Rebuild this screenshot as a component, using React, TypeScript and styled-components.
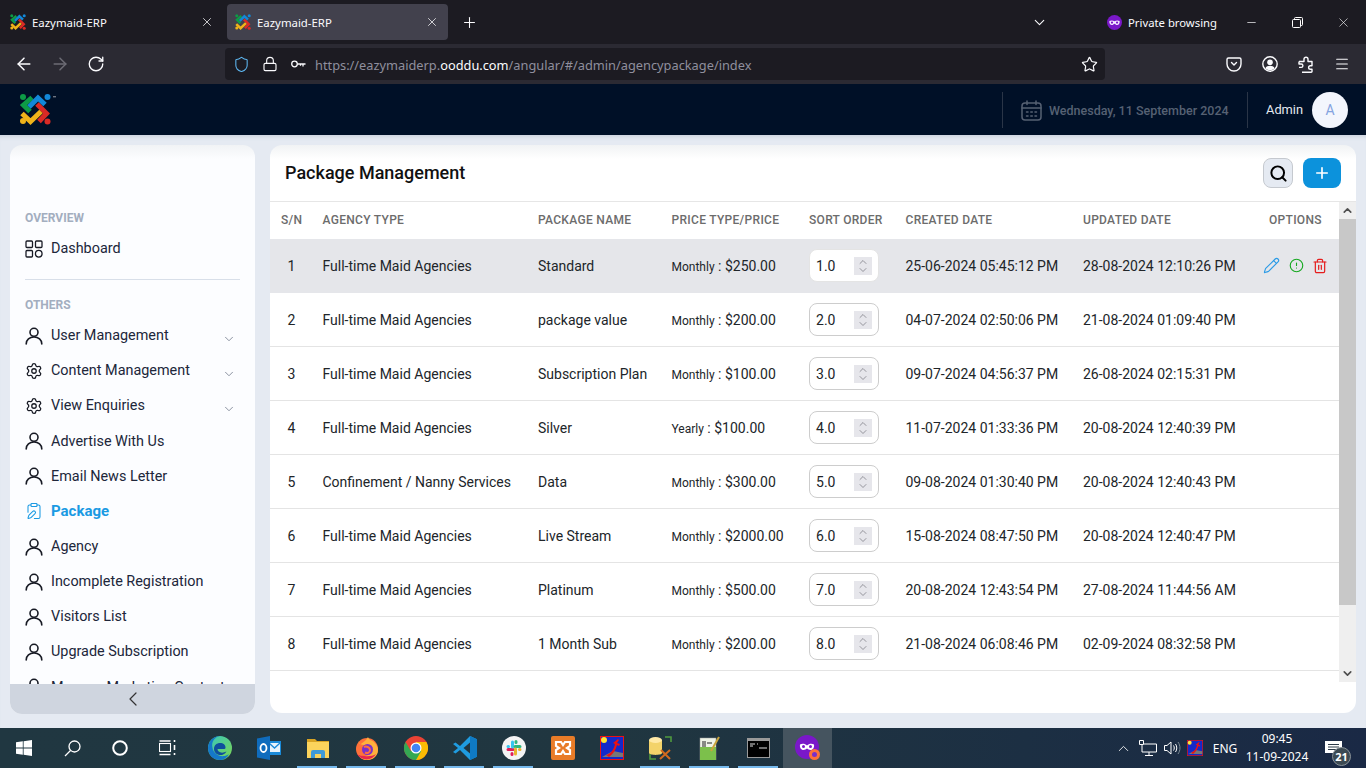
import React from "react";
import styled, { createGlobalStyle } from "styled-components";
import {
  ArrowLeft, ArrowRight, RotateCw, Shield, Lock, Star, Menu, X, Plus, ChevronDown, ChevronUp, ChevronLeft,
  Minus, Settings, ClipboardPen, Pencil, CircleAlert, Trash2, Search,
} from "lucide-react";

const Global = createGlobalStyle`
  html, body { margin: 0; padding: 0; height: 100%; overflow: hidden; }
  body { font-family: Roboto, "Liberation Sans", sans-serif; background: #e5eaf2; }
  * { box-sizing: border-box; }
`;

const Page = styled.div`
  width: 1366px; height: 768px; display: flex; flex-direction: column; overflow: hidden;
`;

/* ---------- browser chrome ---------- */
const TabBar = styled.div`
  height: 44px; background: #1c1b22; display: flex; align-items: flex-start; padding: 4px 0 0 2px; color: #fbfbfe;
  font-family: "Noto Sans", sans-serif; font-size: 11.4px; flex: none;
`;
const Tab = styled.div<{ $active?: boolean }>`
  width: 221px; height: 36px; border-radius: 4px; display: flex; align-items: center; padding: 0 9px 0 8px; gap: 6px;
  background: ${(p) => (p.$active ? "#42414d" : "transparent")};
  margin-right: ${(p) => (p.$active ? "0" : "4px")};
  & > span { flex: 1; }
`;
const NewTab = styled.div`
  width: 42px; height: 36px; display: flex; align-items: center; justify-content: center;
`;
const TabSpacer = styled.div`flex: 1;`;
const TabList = styled.div`
  width: 30px; height: 36px; margin-right: 53px; display: flex; align-items: center; justify-content: center;
`;
const Private = styled.div`
  display: flex; align-items: center; gap: 6px; height: 36px; width: 121px; font-size: 11.3px; white-space: nowrap;
`;
const WinBtn = styled.div`
  width: 46px; height: 36px; display: flex; align-items: center; justify-content: center;
`;
const Toolbar = styled.div`
  height: 40px; background: #2b2a33; display: flex; align-items: center; flex: none; color: #fbfbfe;
`;
const NavGroup = styled.div`
  width: 225px; display: flex; align-items: center; padding-left: 14px; gap: 16px; flex: none;
`;
const Reload = styled.span`
  display: flex; margin-left: 1px;
`;
const UrlBar = styled.div`
  width: 880px; height: 32px; background: #1c1b22; border-radius: 4px; display: flex; align-items: center; padding-left: 8px;
  font-family: "Noto Sans", sans-serif; font-size: 12.8px; color: #8f8f9d; flex: none;
  b { font-weight: 400; color: #fbfbfe; }
`;
const UrlIcons = styled.div`
  display: flex; align-items: center; gap: 12px; margin-right: 9px; flex: none; color: #fbfbfe;
`;
const UrlText = styled.div`flex: 1; white-space: nowrap; padding-top: 1px;`;
const UrlEnd = styled.div`width: 32px; display: flex; justify-content: center; color: #fbfbfe;`;
const ToolIcons = styled.div`
  flex: 1; display: flex; align-items: center; justify-content: flex-end; gap: 20px; padding-right: 16px;
`;

/* ---------- app header ---------- */
const AppHeader = styled.header`
  height: 51px; background: #001027; display: flex; align-items: center; padding: 0 18px 0 19px; flex: none;
`;
const HeaderRight = styled.div`
  margin-left: auto; display: flex; align-items: center; height: 36px;
`;
const DateBlock = styled.div`
  height: 36px; border-left: 1px solid #2a3547; border-right: 1px solid #2a3547; display: flex; align-items: center;
  gap: 7px; padding: 1px 0 0 18px; width: 246px;
  font-size: 12.5px; font-weight: 500; color: #566173; white-space: nowrap;
  & > svg { flex: none; }
`;
const AdminName = styled.div`
  color: #e5e9f0; font-size: 12.8px; margin: 0 9px 0 18px;
`;
const Avatar = styled.div`
  width: 36px; height: 36px; border-radius: 50%; background: #f3f6fd; color: #84a3e0; display: flex; align-items: center;
  justify-content: center; font-size: 14px;
`;

/* ---------- body ---------- */
const Main = styled.div`
  height: 593px; background: #e5eaf2; display: flex; padding: 10px 10px 14px 10px; gap: 15px; flex: none;
  box-shadow: inset 0 5px 5px -4px #c4ccd8;
`;
const Sidebar = styled.aside`
  width: 245px; height: 569px; border-radius: 12px; overflow: hidden; display: flex; flex-direction: column;
  background: linear-gradient(#f1f3f5 0, #fcfdff 14px);
`;
const SideScroll = styled.nav`
  flex: 1; overflow: hidden; padding: 66px 15px 0;
`;
const SideLabel = styled.div`
  font-size: 12px; font-weight: 700; color: #a3aebf; height: 14px; line-height: 14px; margin-bottom: 6px;
`;
const SideItem = styled.div<{ $active?: boolean }>`
  height: 35.15px; display: flex; align-items: center; gap: 8px; font-size: ${(p) => (p.$active ? "15px" : "14.4px")}; white-space: nowrap;
  font-weight: ${(p) => (p.$active ? 700 : 400)};
  color: ${(p) => (p.$active ? "#1a9ae3" : "#20263a")};
  & > svg { flex: none; }
`;
const Caret = styled.span`
  margin-left: auto; margin-right: 4px; margin-top: 7px; display: flex; color: #7b8494;
`;
const SideRule = styled.div`
  height: 1px; background: #d8dfe9; margin: 13px 0 18px;
`;
const SideFooter = styled.div`
  height: 30px; background: #cfd5df; display: flex; align-items: center; justify-content: center; flex: none; color: #333;
`;

const Panel = styled.section`
  width: 1086px; height: 568px; border-radius: 12px; overflow: hidden; display: flex; flex-direction: column;
  background: linear-gradient(#f1f3f4 0, #fff 14px);
`;
const PanelHead = styled.div`
  height: 57px; display: flex; align-items: center; padding: 0 15px; border-bottom: 1px solid #e6e6e6; flex: none;
`;
const Title = styled.h1`
  margin: 0; font-size: 18px; font-weight: 500; color: #111; flex: 1; position: relative; top: -1px;
`;
const SearchBtn = styled.div`
  width: 30px; height: 30px; border-radius: 8px; background: #e5eaf2; border: 1px solid #c5c9cf; display: flex;
  align-items: center; justify-content: center; margin-right: 10px;
`;
const AddBtn = styled.div`
  width: 38px; height: 30px; border-radius: 8px; background: #0c92dc; color: #fff; display: flex;
  align-items: center; justify-content: center;
`;
const TableWrap = styled.div`
  height: 480px; display: flex; flex: none;
`;
const Table = styled.div`
  width: 1069px; flex: none; overflow: hidden;
`;
const COLS = "41.5px 215.5px 133.5px 137.5px 96.5px 177.5px 180px 87px";
const HeadRow = styled.div`
  height: 37px; display: grid; grid-template-columns: ${COLS}; align-items: center; padding: 0 0 2px 11px;
  font-size: 12px; font-weight: 500; color: #6c6c6c; letter-spacing: 0.3px; white-space: nowrap;
`;
const OptionsHead = styled.span`
  padding-left: 6px;
`;
const Row = styled.div<{ $active?: boolean }>`
  height: 54px; display: grid; grid-template-columns: ${COLS}; align-items: center; padding-left: 11px;
  font-size: 14px; color: #212529; white-space: nowrap; border-bottom: 1px solid #e4e4e4;
  background: ${(p) => (p.$active ? "#e5e6ea" : "#fff")};
  border-bottom-color: ${(p) => (p.$active ? "#e5e6ea" : "#e4e4e4")};
`;
const Num = styled.span`
  width: 21px; text-align: center;
`;
const Price = styled.span`
  small { font-size: 12px; }
`;
const SortBox = styled.div<{ $active?: boolean }>`
  width: 70px; height: 33px; background: #fff; border: 1px solid ${(p) => (p.$active ? "#e4e4e4" : "#cdcdcd")};
  border-radius: 8px; display: flex; align-items: center; padding-left: 6px; justify-content: space-between; padding-right: 6px;
`;
const Spin = styled.div`
  width: 18px; height: 18px; background: #e6e6eb; display: flex; flex-direction: column; align-items: center;
  justify-content: center; color: #85858e; svg { margin: -2px 0; }
`;
const Options = styled.div`
  display: flex; align-items: center; gap: 8.5px;
`;
const Scrollbar = styled.div`
  width: 17px; background: #efefef; display: flex; flex-direction: column; flex: none; color: #505050;
`;
const ScrollEnd = styled.div`
  height: 17px; display: flex; align-items: center; justify-content: center; flex: none;
`;
const ScrollThumb = styled.div`
  height: 386px; background: #c8c8c8; flex: none;
`;
const ScrollGap = styled.div`flex: 1;`;

/* ---------- taskbar ---------- */
const Taskbar = styled.footer`
  height: 40px; display: flex; align-items: center; background: linear-gradient(90deg, #203741 0, #203640 45%, #1c2f43 75%, #1a2945 100%);
  color: #fff; flex: none;
`;
const SysBtn = styled.div`
  width: 48px; height: 40px; display: flex; align-items: center; justify-content: center; flex: none;
`;
const Tile = styled.div<{ $open?: boolean; $active?: boolean }>`
  width: 49px; height: 40px; display: flex; align-items: center; justify-content: center; flex: none; position: relative;
  background: ${(p) => (p.$active ? "#45545f" : "transparent")};
  &::after {
    content: ""; position: absolute; left: 4px; right: 5px; bottom: 0; height: 2px;
    background: ${(p) => (p.$open ? "#76b9ed" : "transparent")};
  }
`;
const TileGroup = styled.div`
  display: flex; margin-left: 3px;
`;
const Tray = styled.div`
  margin-left: auto; display: flex; align-items: center; height: 40px; padding-right: 18px; font-family: "Noto Sans", sans-serif;
  font-size: 12px; color: #fff;
`;
const TraySlot = styled.div<{ $w: number }>`
  width: ${(p) => p.$w}px; display: flex; justify-content: center; align-items: center; flex: none;
`;
const Clock = styled.div`
  width: 68px; text-align: center; line-height: 18px; font-size: 12px; flex: none; white-space: nowrap;
`;
const Notify = styled.div`
  width: 30px; height: 40px; margin-left: 7px; position: relative; display: flex; align-items: center; justify-content: center;
`;
const NotifyCount = styled.span`
  position: absolute; left: 14px; top: 19px; width: 19px; height: 19px; border-radius: 50%; background: #3c4a53;
  border: 1px solid #8b949a; font-size: 11px; font-weight: 700; display: flex; align-items: center; justify-content: center; line-height: 1;
`;

/* ---------- drawings ---------- */
const LogoMarks = () => (
  <>
    <circle cx="23" cy="98" r="3" fill="#0d9b46" />
    <circle cx="47.5" cy="98" r="3" fill="#1288d8" />
    <circle cx="23" cy="122" r="3" fill="#efb31a" />
    <circle cx="47.5" cy="122.5" r="3" fill="#da2a25" />
    <polyline points="32,98.5 23.5,106 30,112.5" stroke="#0d9b46" strokeWidth="5" />
    <polyline points="29,108 38,99 45,105.5" stroke="#1288d8" strokeWidth="5" />
    <polyline points="37,105 46.5,114.5 39,122.5" stroke="#da2a25" strokeWidth="5" />
    <polyline points="22,114.5 30.5,122.5 41,112.5" stroke="#efb31a" strokeWidth="5" />
  </>
);
const Logo = () => (
  <svg width="38" height="34" viewBox="19 94 38 34" fill="none">
    <LogoMarks />
    <rect x="53" y="97" width="3" height="1.4" fill="#6d7480" />
  </svg>
);
const Favicon = () => (
  <svg width="16" height="16" viewBox="19.5 94.5 31.5 31.5" fill="none"><LogoMarks /></svg>
);
const UserIcon = () => (
  <svg width="18" height="18" viewBox="0 0 18 18" fill="none" stroke="#171a24" strokeWidth="1.6" strokeLinecap="round">
    <circle cx="9" cy="5.3" r="4" />
    <path d="M1.2 17c0-4.2 3.4-7 7.8-7s7.800 2.800 7.800 7" />
  </svg>
);
const DashIcon = () => (
  <svg width="18" height="18" viewBox="0 0 18 18" fill="none" stroke="#171a24" strokeWidth="1.300">
    <rect x="1" y="1" width="6.500" height="6.500" rx="1" />
    <rect x="10.500" y="1" width="6.500" height="6.500" rx="1" />
    <rect x="1" y="10.500" width="6.500" height="6.500" rx="1" />
    <circle cx="13.750" cy="13.750" r="3.300" />
  </svg>
);
const PrivateMask = () => (
  <svg width="15" height="15" viewBox="0 0 16 16">
    <circle cx="8" cy="8" r="8" fill="#7a18c9" />
    <path d="M2.500 6.500c1.800-1 3.800-.8 5.500.2 1.700-1 3.700-1.200 5.500-.2.200 2.800-1 4.200-2.700 4.200-1.200 0-2-1-2.800-1.400-.8.400-1.600 1.400-2.800 1.400-1.700 0-2.900-1.400-2.700-4.200z" fill="#f4e9ff" />
    <circle cx="5.300" cy="8" r="1.200" fill="#7a18c9" /><circle cx="10.700" cy="8" r="1.200" fill="#7a18c9" />
  </svg>
);
const KeyIcon = () => (
  <svg width="16" height="16" viewBox="0 0 16 16" fill="none" stroke="#fbfbfe" strokeWidth="1.300">
    <circle cx="4.500" cy="8" r="2.800" /><path d="M7.300 8H15.500M13 8v2.500M10.500 8v1.800" />
  </svg>
);
const Restore = () => (
  <svg width="11" height="11" viewBox="0 0 11 11" fill="none" stroke="#fff" strokeWidth="1">
    <rect x=".5" y="2.500" width="8" height="8" rx="1" /><path d="M2.500 2.500V1.500a1 1 0 0 1 1-1h6a1 1 0 0 1 1 1v6a1 1 0 0 1-1 1h-1" />
  </svg>
);
const Pocket = () => (
  <svg width="16" height="16" viewBox="0 0 16 16" fill="none" stroke="#fbfbfe" strokeWidth="1.400" strokeLinecap="round" strokeLinejoin="round">
    <path d="M2.500 2h11A1.500 1.500 0 0 1 15 3.500V8a7 7 0 0 1-14 0V3.500A1.500 1.500 0 0 1 2.500 2z" /><path d="M5.500 6.500L8 9l2.500-2.500" />
  </svg>
);
const Account = () => (
  <svg width="16" height="16" viewBox="0 0 16 16" fill="none">
    <circle cx="8" cy="8" r="7.200" stroke="#fbfbfe" strokeWidth="1.400" />
    <circle cx="8" cy="6.300" r="2.800" fill="#fbfbfe" />
    <path d="M3.300 12.200c1-1.700 2.700-2.400 4.700-2.400s3.700.7 4.700 2.400c-1.200 1.300-2.800 2-4.700 2s-3.500-.7-4.700-2z" fill="#fbfbfe" />
  </svg>
);
const PuzzleIcon = () => (
  <svg width="16" height="17" viewBox="0 0 16 17" fill="none" stroke="#fbfbfe" strokeWidth="1.400" strokeLinejoin="round">
    <path d="M1 5.500h5V3.200a2 2 0 0 1 4 0v2.300h4v4.200h-1.600a1.800 1.800 0 0 0 0 3.600H14V15.500a.8.800 0 0 1-.8.800H4M1 5.500V8h2.200a1.700 1.700 0 0 1 0 3.400H1" />
  </svg>
);
const CalendarIcon = () => (
  <svg width="21" height="21" viewBox="0 0 21 21" fill="none" stroke="#566173" strokeWidth="1.500" strokeLinecap="round">
    <rect x="1" y="3" width="19" height="17" rx="3" /><path d="M1 8h19M6 1v3.500M15 1v3.500" />
    <path d="M5.500 12h1.500M9.800 12h1.500M14 12h1.500M5.500 16h1.500M9.800 16h1.500M14 16h1.500" />
  </svg>
);
const WinLogo = () => (
  <svg width="16" height="16" viewBox="0 0 16 16" fill="#fff">
    <path d="M0 2.300l6.800-1v6.300H0zM7.600 1.200L16 0v7.600H7.600zM0 8.400h6.800v6.300l-6.800-1zM7.600 8.400H16V16l-8.400-1.200z" />
  </svg>
);
const TaskSearch = () => (
  <svg width="17" height="17" viewBox="0 0 17 17" fill="none" stroke="#fff" strokeWidth="1.300">
    <circle cx="10.500" cy="6.500" r="5.500" /><path d="M6.500 10.500L1 16" />
  </svg>
);
const Cortana = () => (
  <svg width="16" height="16" viewBox="0 0 16 16" fill="none" stroke="#fff" strokeWidth="2"><circle cx="8" cy="8" r="6.800" /></svg>
);
const TaskView = () => (
  <svg width="18" height="16" viewBox="0 0 18 16" fill="none" stroke="#fff" strokeWidth="1.100">
    <rect x=".5" y="3.500" width="11" height="8" /><path d="M.5 1h11M.5 14.500h11M15.500 0v2M15.500 5v5M15.500 13v2" strokeWidth="1.600" />
  </svg>
);
const Edge = () => (
  <svg width="24" height="24" viewBox="0 0 24 24">
    <defs>
      <linearGradient id="eg" x1="0" y1="0" x2="1" y2="1"><stop offset="0" stopColor="#36c7c0" /><stop offset="1" stopColor="#7cd651" /></linearGradient>
    </defs>
    <circle cx="12" cy="12" r="12" fill="url(#eg)" />
    <path d="M0 12C0 5 6 0 12 0c-5 1-9 5-7.500 12 1 5 6 9 12 8 1.500-.2 3-1 4.500-2-2 4-5.500 6-9 6-7 0-12-5-12-12z" fill="#1578c9" />
    <path d="M6 13c0-4 3-6 6-6 3.500 0 5.500 2 5.500 4.500 0 1-.5 1.500-2 1.500h-6c0 3 4 5 9 2.500-2 3-5 4-7 3.500-3-.5-5.500-3-5.500-6z" fill="#0f4f9d" />
  </svg>
);
const Outlook = () => (
  <svg width="24" height="24" viewBox="0 0 24 24">
    <rect x="10" y="5" width="14" height="14" fill="#1a8ad8" />
    <path d="M12 7h11v9H12z" fill="#e7f3fb" /><path d="M12 7l5.500 5L23 7" fill="none" stroke="#1a8ad8" strokeWidth="1.300" />
    <path d="M0 2.500L13 0v24L0 21.500z" fill="#0f6cbd" />
    <ellipse cx="6.500" cy="12" rx="3" ry="4" fill="none" stroke="#fff" strokeWidth="1.800" />
  </svg>
);
const Folder = () => (
  <svg width="22" height="20" viewBox="0 0 22 20">
    <path d="M0 1h8l2 2h12v3H0z" fill="#d9a424" />
    <rect x="0" y="4" width="22" height="16" fill="#fbd35c" />
    <path d="M4 20v-6a2 2 0 0 1 2-2h10a2 2 0 0 1 2 2v6h-4v-4H8v4z" fill="#3f9ad8" />
  </svg>
);
const Firefox = () => (
  <svg width="24" height="24" viewBox="0 0 24 24">
    <circle cx="12" cy="13" r="11" fill="#ff7139" />
    <path d="M3 5c1 2 1 3 3 3 2-2 5-3 7-7 1 3 3 3 6 5 3 3 4 6 4 8 0 6-5 10-11 10-3 0-8-2-9-6 5 4 11 2 12-1 .5-2-2-4-5-4 0-3 2-3 2-4.500-4 1-6 1-9-3.500z" fill="#ffb13c" />
    <circle cx="12.500" cy="13.500" r="5.500" fill="#7b2fc9" />
    <path d="M9 11c2-1 6 0 6 3s-3 3.500-5 2.500" fill="none" stroke="#ff6f3c" strokeWidth="2" />
    <path d="M2 18a11 11 0 0 0 19 0c-4 3-14 3-19 0z" fill="#e6274d" />
  </svg>
);
const ChromeIcon = () => (
  <svg width="24" height="24" viewBox="0 0 24 24">
    <circle cx="12" cy="12" r="12" fill="#ea4335" />
    <path d="M12 24a12 12 0 0 0 10.400-18H12z" fill="#fbbc04" />
    <path d="M1.600 6A12 12 0 0 0 12 24l5.200-9H6.800z" fill="#34a853" />
    <circle cx="12" cy="12" r="5.500" fill="#fff" /><circle cx="12" cy="12" r="4.300" fill="#4285f4" />
  </svg>
);
const VSCode = () => (
  <svg width="24" height="24" viewBox="0 0 24 24">
    <path d="M17 0l7 3.300v17.400L17 24 7 14l-4.500 3.500L0 16l5-4-5-4 2.500-1.500L7 10z" fill="#1f9ce0" />
    <path d="M17 0l7 3.300v17.400L17 24z" fill="#0f7ac4" /><path d="M17 6.500L10.500 12l6.500 5.500z" fill="#203640" />
  </svg>
);
const Slack = () => (
  <svg width="24" height="24" viewBox="0 0 24 24" strokeWidth="3" strokeLinecap="round">
    <circle cx="12" cy="12" r="12" fill="#f4f4f4" />
    <path d="M6 13.500h5M10 17.500v1" stroke="#e01e5a" />
    <path d="M10.500 6v5M6 10.500h.5" stroke="#36c5f0" />
    <path d="M18 10.500h-5M14 6.500v-1" stroke="#2eb67d" />
    <path d="M13.500 18v-5M18 13.500h-.5" stroke="#ecb22e" />
  </svg>
);
const Xampp = () => (
  <svg width="24" height="24" viewBox="0 0 24 24">
    <rect width="24" height="24" rx="2" fill="#e87c28" />
    <path d="M5 6h5l2 3 2-3h5v4l-3 2 3 2v4h-5l-2-3-2 3H5v-4l3-2-3-2z" fill="none" stroke="#fff" strokeWidth="2.200" />
  </svg>
);
const XServer = ({ s }: { s: number }) => (
  <svg width={s} height={s} viewBox="0 0 24 24">
    <rect x=".5" y=".5" width="23" height="23" fill="#1529c9" stroke="#ee1111" />
    <circle cx="4" cy="4" r="3" fill="#ffe534" />
    <path d="M2 21h21v-4l-10-2z" fill="#777" />
    <path d="M6 19c5-1 8-6 9-11l-2-1 5-4 1 1-2 3 3 1-1 2-2-1c-1 5-4 9-8 12z" fill="#ee1111" />
  </svg>
);
const DbTool = () => (
  <svg width="24" height="24" viewBox="0 0 24 24">
    <path d="M0 4v13c0 2.500 13 2.500 13 0V4z" fill="#f3d36a" /><ellipse cx="6.500" cy="4" rx="6.500" ry="3" fill="#ffe9a6" />
    <path d="M16 1h6v5M1 18v5h6" fill="none" stroke="#4f9a3f" strokeWidth="1.600" />
    <path d="M11 23l10-9M21 23l-9-9" stroke="#d2691e" strokeWidth="2" />
  </svg>
);
const Notepad = () => (
  <svg width="22" height="24" viewBox="0 0 22 24">
    <rect x="1" y="2" width="16" height="22" fill="#eef3e6" stroke="#999" strokeWidth=".5" />
    <rect x="1" y="11" width="16" height="13" fill="#7cc04b" />
    <path d="M4 5v6M6 5v6M8 7h5" stroke="#222" strokeWidth="1" />
    <path d="M12 15L20 1" stroke="#c9a33b" strokeWidth="2" />
  </svg>
);
const Cmd = () => (
  <svg width="23" height="20" viewBox="0 0 23 20">
    <rect width="23" height="20" fill="#9a9a9a" /><rect x="1" y="3" width="21" height="16" fill="#000" />
    <path d="M3 6h5M10 6h1M3 8h3M12 10h8" stroke="#ddd" strokeWidth="1" />
  </svg>
);
const FirefoxPrivate = () => (
  <svg width="26" height="26" viewBox="0 0 26 26">
    <circle cx="12" cy="12" r="12" fill="#7a18c9" />
    <path d="M5 9.500c2-1 5-1 7 1 2-2 5-2 7-1 .5 3-1 5.500-3.500 5.500-1.500 0-2.500-1-3.500-1.500-1 .5-2 1.500-3.500 1.500C6 15 4.500 12.500 5 9.500z" fill="#fff" />
    <circle cx="8.500" cy="11.500" r="1.500" fill="#7a18c9" /><circle cx="15.500" cy="11.500" r="1.500" fill="#7a18c9" />
    <circle cx="19.500" cy="19.500" r="5.500" fill="#ff7139" /><circle cx="19.500" cy="19.500" r="2.500" fill="#7b2fc9" />
  </svg>
);
const NetworkIcon = () => (
  <svg width="18" height="16" viewBox="0 0 18 16" fill="none" stroke="#fff" strokeWidth="1">
    <path d="M4.500 .5H.5v4h4zM5 4h12.500v8H3V5M10 12v3M6 15.500h8" />
  </svg>
);
const Volume = () => (
  <svg width="17" height="14" viewBox="0 0 17 14" fill="none" stroke="#fff" strokeWidth="1">
    <path d="M.5 4.500H3L7 1v12L3 9.500H.5zM9.500 4.500c1 1.500 1 3.500 0 5M11.500 3c1.700 2.500 1.700 5.500 0 8" />
    <path d="M14 1c2.600 3.600 2.600 8.400 0 12" stroke="#7c8a94" />
  </svg>
);
const NoteIcon = () => (
  <svg width="17" height="15" viewBox="0 0 17 15" fill="#fff">
    <path d="M0 0h17v12H0z" /><path d="M3 3.500h11M3 6h11M3 8.500h8" stroke="#2b3a48" strokeWidth="1" />
  </svg>
);

/* ---------- data ---------- */
const F = "Full-time Maid Agencies";
const rows = [
  [F, "Standard", "Monthly", "$250.00", "25-06-2024 05:45:12 PM", "28-08-2024 12:10:26 PM"],
  [F, "package value", "Monthly", "$200.00", "04-07-2024 02:50:06 PM", "21-08-2024 01:09:40 PM"],
  [F, "Subscription Plan", "Monthly", "$100.00", "09-07-2024 04:56:37 PM", "26-08-2024 02:15:31 PM"],
  [F, "Silver", "Yearly", "$100.00", "11-07-2024 01:33:36 PM", "20-08-2024 12:40:39 PM"],
  ["Confinement / Nanny Services", "Data", "Monthly", "$300.00", "09-08-2024 01:30:40 PM", "20-08-2024 12:40:43 PM"],
  [F, "Live Stream", "Monthly", "$2000.00", "15-08-2024 08:47:50 PM", "20-08-2024 12:40:47 PM"],
  [F, "Platinum", "Monthly", "$500.00", "20-08-2024 12:43:54 PM", "27-08-2024 11:44:56 AM"],
  [F, "1 Month Sub", "Monthly", "$200.00", "21-08-2024 06:08:46 PM", "02-09-2024 08:32:58 PM"],
];
const tiles: [React.ReactNode, boolean][] = [
  [<Edge />, false], [<Outlook />, false], [<Folder />, true], [<Firefox />, true], [<ChromeIcon />, true],
  [<VSCode />, true], [<Slack />, true], [<Xampp />, false], [<XServer s={24} />, false], [<DbTool />, true],
  [<Notepad />, true], [<Cmd />, true],
];
const menu: [string, "user" | "gear", boolean][] = [
  ["User Management", "user", true], ["Content Management", "gear", true], ["View Enquiries", "gear", true],
  ["Advertise With Us", "user", false], ["Email News Letter", "user", false],
];
const menu2 = ["Agency", "Incomplete Registration", "Visitors List", "Upgrade Subscription", "Manage Marketing Content"];

export default function App() {
  return (
    <Page>
      <Global />
      <TabBar>
        <Tab>
          <Favicon /><span>Eazymaid-ERP</span><X size={14} strokeWidth={1.300} />
        </Tab>
        <Tab $active>
          <Favicon /><span>Eazymaid-ERP</span><X size={14} strokeWidth={1.300} />
        </Tab>
        <NewTab><Plus size={17} strokeWidth={1.500} /></NewTab>
        <TabSpacer />
        <TabList><ChevronDown size={17} strokeWidth={1.500} /></TabList>
        <Private><PrivateMask />Private browsing</Private>
        <WinBtn><Minus size={13} strokeWidth={1.300} /></WinBtn>
        <WinBtn><Restore /></WinBtn>
        <WinBtn><X size={15} strokeWidth={1} /></WinBtn>
      </TabBar>
      <Toolbar>
        <NavGroup>
          <ArrowLeft size={20} strokeWidth={1.800} />
          <ArrowRight size={20} strokeWidth={1.800} color="#6d6c75" />
          <Reload><RotateCw size={18} strokeWidth={1.800} /></Reload>
        </NavGroup>
        <UrlBar>
          <UrlIcons>
            <Shield size={17} strokeWidth={1.500} color="#5db6f0" />
            <Lock size={16} strokeWidth={1.700} />
            <KeyIcon />
          </UrlIcons>
          <UrlText>https://eazymaiderp.<b>ooddu.com</b>/angular/#/admin/agencypackage/index</UrlText>
          <UrlEnd><Star size={17} strokeWidth={1.700} /></UrlEnd>
        </UrlBar>
        <ToolIcons>
          <Pocket />
          <Account />
          <PuzzleIcon />
          <Menu size={16} strokeWidth={1.600} />
        </ToolIcons>
      </Toolbar>
      <AppHeader>
        <Logo />
        <HeaderRight>
          <DateBlock><CalendarIcon />Wednesday, 11 September 2024</DateBlock>
          <AdminName>Admin</AdminName>
          <Avatar>A</Avatar>
        </HeaderRight>
      </AppHeader>
      <Main>
        <Sidebar>
          <SideScroll>
            <SideLabel>OVERVIEW</SideLabel>
            <SideItem><DashIcon />Dashboard</SideItem>
            <SideRule />
            <SideLabel>OTHERS</SideLabel>
            {menu.map(([label, icon, caret]) => (
              <SideItem key={label}>
                {icon === "user" ? <UserIcon /> : <Settings size={18} strokeWidth={1.700} color="#171a24" />}
                {label}
                {caret && <Caret><ChevronDown size={14} strokeWidth={1.500} /></Caret>}
              </SideItem>
            ))}
            <SideItem $active><ClipboardPen size={18} strokeWidth={1.400} color="#1a9ae3" />Package</SideItem>
            {menu2.map((label) => (
              <SideItem key={label}><UserIcon />{label}</SideItem>
            ))}
          </SideScroll>
          <SideFooter><ChevronLeft size={24} strokeWidth={1.200} /></SideFooter>
        </Sidebar>
        <Panel>
          <PanelHead>
            <Title>Package Management</Title>
            <SearchBtn><Search size={19} strokeWidth={2.500} color="#000" /></SearchBtn>
            <AddBtn><Plus size={18} strokeWidth={2.200} /></AddBtn>
          </PanelHead>
          <TableWrap>
            <Table>
              <HeadRow>
                <span>S/N</span><span>AGENCY TYPE</span><span>PACKAGE NAME</span><span>PRICE TYPE/PRICE</span>
                <span>SORT ORDER</span><span>CREATED DATE</span><span>UPDATED DATE</span><OptionsHead>OPTIONS</OptionsHead>
              </HeadRow>
              {rows.map((r, i) => (
                <Row key={i} $active={i === 0}>
                  <Num>{i + 1}</Num>
                  <span>{r[0]}</span>
                  <span>{r[1]}</span>
                  <Price><small>{r[2]}</small> : {r[3]}</Price>
                  <SortBox $active={i === 0}>
                    {i + 1}.0
                    <Spin><ChevronUp size={12} strokeWidth={1.700} /><ChevronDown size={12} strokeWidth={1.700} /></Spin>
                  </SortBox>
                  <span>{r[4]}</span>
                  <span>{r[5]}</span>
                  {i === 0 ? (
                    <Options>
                      <Pencil size={17} strokeWidth={1.600} color="#2b9be6" />
                      <CircleAlert size={15} strokeWidth={1.800} color="#16a821" />
                      <Trash2 size={16} strokeWidth={1.800} color="#e51c1c" />
                    </Options>
                  ) : <span />}
                </Row>
              ))}
            </Table>
            <Scrollbar>
              <ScrollEnd><ChevronUp size={13} strokeWidth={3} /></ScrollEnd>
              <ScrollThumb />
              <ScrollGap />
              <ScrollEnd><ChevronDown size={13} strokeWidth={3} /></ScrollEnd>
            </Scrollbar>
          </TableWrap>
        </Panel>
      </Main>
      <Taskbar>
        <SysBtn><WinLogo /></SysBtn>
        <SysBtn><TaskSearch /></SysBtn>
        <SysBtn><Cortana /></SysBtn>
        <SysBtn><TaskView /></SysBtn>
        <TileGroup>
          {tiles.map(([icon, open], i) => <Tile key={i} $open={open}>{icon}</Tile>)}
          <Tile $active><FirefoxPrivate /></Tile>
        </TileGroup>
        <Tray>
          <TraySlot $w={24}><ChevronUp size={17} strokeWidth={1.200} /></TraySlot>
          <TraySlot $w={26}><NetworkIcon /></TraySlot>
          <TraySlot $w={22}><Volume /></TraySlot>
          <TraySlot $w={24}><XServer s={16} /></TraySlot>
          <TraySlot $w={36}>ENG</TraySlot>
          <Clock>09:45<br />11-09-2024</Clock>
          <Notify><NoteIcon /><NotifyCount>21</NotifyCount></Notify>
        </Tray>
      </Taskbar>
    </Page>
  );
}
